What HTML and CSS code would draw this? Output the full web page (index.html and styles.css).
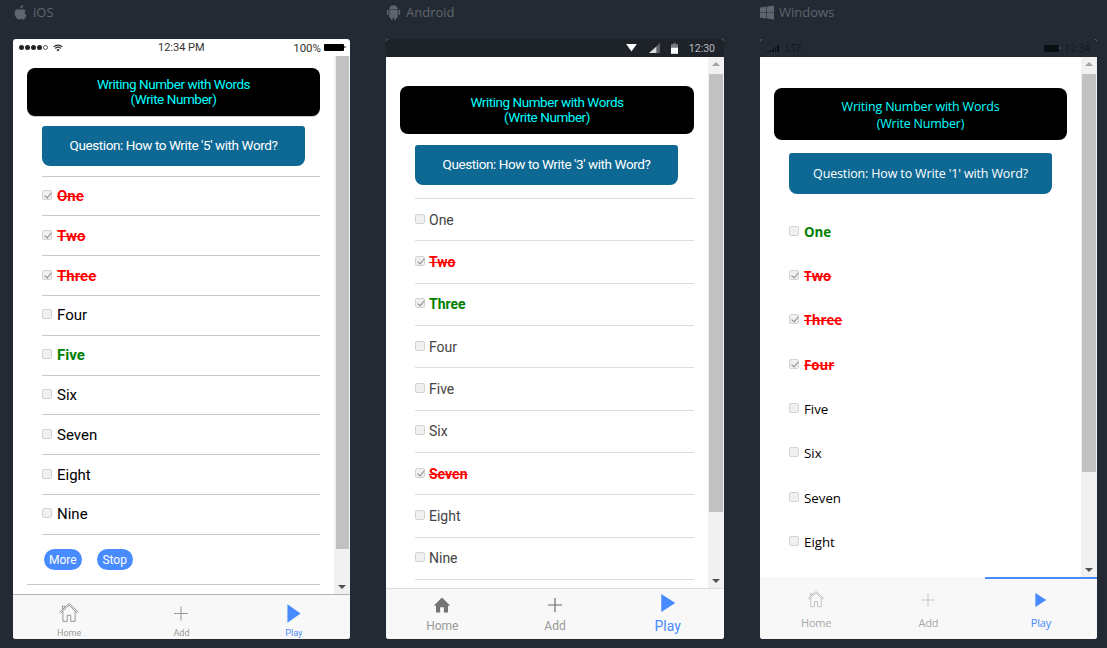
FILE: index.html
```html
<!DOCTYPE html>
<html lang="en">

<head>
  <meta charset="UTF-8">
  <title>Write Number</title>
  <link rel="stylesheet" href="styles.css">
</head>

<body>

  <section class="device ios">
    <header class="platform">
      <svg class="platform-icon" viewBox="0 0 14 16"><path d="M10 0c.1 1.100-.3 2-.9 2.700-.6.700-1.500 1.200-2.400 1.100-.1-1 .4-2 .9-2.600C8.200.500 9.200.100 10 0zM13 5.400c-1 .7-1.500 1.500-1.500 2.700 0 1.300.7 2.300 2 2.900-.3 1-.8 1.900-1.400 2.800-.6.800-1.200 1.700-2.200 1.700s-1.300-.6-2.500-.6-1.600.6-2.500.6c-1 0-1.700-.9-2.300-1.800C1.400 12.200.600 10.300.600 8.500c0-2.600 1.700-4 3.400-4 .9 0 1.700.6 2.300.6.600 0 1.500-.7 2.600-.7 1 0 2.300.4 3.100 1z"/></svg>
      iOS
    </header>
    <div class="phone">
      <div class="status">
        <span class="signal"><i></i><i></i><i></i><i></i><i class="off"></i></span>
        <svg class="wifi" viewBox="0 0 14 10"><path d="M7 10 4.800 7.500a3.200 3.200 0 0 1 4.400 0zM3.700 6.300 2.600 5.100a6.400 6.400 0 0 1 8.800 0l-1.100 1.200a4.800 4.800 0 0 0-6.600 0zM1.500 3.900.4 2.700a9.600 9.600 0 0 1 13.200 0l-1.100 1.200a8 8 0 0 0-11 0z"/></svg>
        <span class="clock">12:34 PM</span>
        <span class="percent">100%</span>
        <span class="battery"></span>
      </div>
      <div class="body">
        <main class="content">
          <h1 class="title">Writing Number with Words<br>(Write Number)</h1>
          <h2 class="question">Question: How to Write '5' with Word?</h2>
          <ul class="answers">
            <li><input type="checkbox" checked disabled><span class="wrong">One</span></li>
            <li><input type="checkbox" checked disabled><span class="wrong">Two</span></li>
            <li><input type="checkbox" checked disabled><span class="wrong">Three</span></li>
            <li><input type="checkbox" disabled><span>Four</span></li>
            <li><input type="checkbox" disabled><span class="right">Five</span></li>
            <li><input type="checkbox" disabled><span>Six</span></li>
            <li><input type="checkbox" disabled><span>Seven</span></li>
            <li><input type="checkbox" disabled><span>Eight</span></li>
            <li><input type="checkbox" disabled><span>Nine</span></li>
          </ul>
          <div class="actions">
            <button class="pill">More</button>
            <button class="pill">Stop</button>
          </div>
        </main>
        <div class="scrollbar"><b class="thumb"></b><i class="arrow-down"></i></div>
      </div>
      <nav class="tabs">
        <a class="tab">
          <svg class="tab-icon" viewBox="0 0 24 24"><path class="line" d="M2.500 11.500 12 2.500l9.500 9M5 9.500V21h5v-7h4v7h5V9.500M4.500 7V3.500H7v1.500M1 10.500 12 .5l11 10"/></svg>
          Home
        </a>
        <a class="tab">
          <svg class="tab-icon" viewBox="0 0 24 24"><path class="line" d="M12 4v16M4 12h16"/></svg>
          Add
        </a>
        <a class="tab active">
          <svg class="tab-icon" viewBox="0 0 24 24"><path d="M4.500 1.500 19.500 12 4.500 22.500z"/></svg>
          Play
        </a>
      </nav>
    </div>
  </section>

  <section class="device android">
    <header class="platform">
      <svg class="platform-icon" viewBox="0 0 16 16"><path d="M3.500 5h9v7.500a1 1 0 0 1-1 1h-.8v1.800a.9.900 0 0 1-1.800 0v-1.800H7.100v1.800a.9.900 0 0 1-1.800 0v-1.800h-.8a1 1 0 0 1-1-1zM1.800 5a.9.900 0 0 1 .9.900v4a.9.900 0 0 1-1.800 0v-4A.9.900 0 0 1 1.800 5zm12.400 0a.9.900 0 0 1 .9.900v4a.9.900 0 0 1-1.800 0v-4a.9.900 0 0 1 .9-.9zM3.500 4.400C3.600 2.900 4.400 1.700 5.600 1L5 .2l.3-.2L6 .8a5 5 0 0 1 4 0l.7-.8.300.2-.6.800c1.200.7 2 1.900 2.100 3.400z"/></svg>
      Android
    </header>
    <div class="phone">
      <div class="status">
        <svg class="wifi" viewBox="0 0 12 9"><path d="M0 0h12L6 8.500z"/></svg>
        <svg class="cell" viewBox="0 0 12 11"><path d="M12 0v11H0z" opacity=".35"/><path d="M8 4v7H0z"/></svg>
        <svg class="charge" viewBox="0 0 8 12"><path d="M2.500 0h3v1H8v11H0V1h2.500z" opacity=".4"/><path d="M0 5h8v7H0z"/></svg>
        <span class="clock">12:30</span>
      </div>
      <div class="body">
        <main class="content">
          <h1 class="title">Writing Number with Words<br>(Write Number)</h1>
          <h2 class="question">Question: How to Write '3' with Word?</h2>
          <ul class="answers">
            <li><input type="checkbox" disabled><span>One</span></li>
            <li><input type="checkbox" checked disabled><span class="wrong">Two</span></li>
            <li><input type="checkbox" checked disabled><span class="right">Three</span></li>
            <li><input type="checkbox" disabled><span>Four</span></li>
            <li><input type="checkbox" disabled><span>Five</span></li>
            <li><input type="checkbox" disabled><span>Six</span></li>
            <li><input type="checkbox" checked disabled><span class="wrong">Seven</span></li>
            <li><input type="checkbox" disabled><span>Eight</span></li>
            <li><input type="checkbox" disabled><span>Nine</span></li>
          </ul>
        </main>
        <div class="scrollbar"><i class="arrow-up"></i><b class="thumb"></b><i class="arrow-down"></i></div>
      </div>
      <nav class="tabs">
        <a class="tab">
          <svg class="tab-icon" viewBox="0 0 24 24"><path d="M12 2 23 13h-3v9h-5.500v-7h-5v7H4v-9H1z"/></svg>
          Home
        </a>
        <a class="tab">
          <svg class="tab-icon" viewBox="0 0 24 24"><path class="line" d="M12 2.500v19M2.500 12h19"/></svg>
          Add
        </a>
        <a class="tab active">
          <svg class="tab-icon" viewBox="0 0 24 24"><path d="M3 0 21.700 12 3 24z"/></svg>
          Play
        </a>
      </nav>
    </div>
  </section>

  <section class="device windows">
    <header class="platform">
      <svg class="platform-icon" viewBox="0 0 15 15"><path d="M0 2.200 6.800 1.200v6H0zM7.500 1.100 15 0v7.200H7.500zM0 7.900h6.800v6L0 13zM7.500 7.900H15V15l-7.500-1z"/></svg>
      Windows
    </header>
    <div class="phone">
      <div class="status">
        <span class="bars"><i></i><i></i><i></i><i></i><i></i></span>
        <span class="lte">LTE</span>
        <span class="battery"></span>
        <span class="clock">12:34</span>
      </div>
      <div class="body">
        <main class="content">
          <h1 class="title">Writing Number with Words<br>(Write Number)</h1>
          <h2 class="question">Question: How to Write '1' with Word?</h2>
          <ul class="answers">
            <li><input type="checkbox" disabled><span class="right">One</span></li>
            <li><input type="checkbox" checked disabled><span class="wrong">Two</span></li>
            <li><input type="checkbox" checked disabled><span class="wrong">Three</span></li>
            <li><input type="checkbox" checked disabled><span class="wrong">Four</span></li>
            <li><input type="checkbox" disabled><span>Five</span></li>
            <li><input type="checkbox" disabled><span>Six</span></li>
            <li><input type="checkbox" disabled><span>Seven</span></li>
            <li><input type="checkbox" disabled><span>Eight</span></li>
          </ul>
        </main>
        <div class="scrollbar"><i class="arrow-up"></i><b class="thumb"></b><i class="arrow-down"></i></div>
      </div>
      <nav class="tabs">
        <a class="tab">
          <svg class="tab-icon" viewBox="0 0 24 24"><path class="line" d="M2.500 11.500 12 2.500l9.500 9M5 9.500V21h5v-7h4v7h5V9.500M4.500 7V3.500H7v1.500M1 10.500 12 .5l11 10"/></svg>
          Home
        </a>
        <a class="tab">
          <svg class="tab-icon" viewBox="0 0 24 24"><path class="line" d="M12 3.500v17M3.500 12h17"/></svg>
          Add
        </a>
        <a class="tab active">
          <svg class="tab-icon" viewBox="0 0 24 24"><path d="M4.500 2.700 19 12 4.500 21.300z"/></svg>
          Play
        </a>
      </nav>
    </div>
  </section>

</body>

</html>
```
FILE: styles.css
```css
* {
  box-sizing: border-box;
}

html,
body {
  height: 100%;
}

body {
  margin: 0;
  padding: 0 10px 9px 13px;
  background-color: #232a33;
  display: flex;
  gap: 36px;
  overflow: hidden;
  font-family: "Roboto", "Liberation Sans", sans-serif;
}

.device {
  width: 337px;
  display: flex;
  flex-direction: column;
}

.device.android {
  width: 338px;
}

.platform {
  height: 39px;
  padding-bottom: 15px;
  display: flex;
  align-items: center;
  gap: 5px;
  font-family: "Open Sans", sans-serif;
  font-size: 13px;
  color: #5f656d;
}

.platform-icon {
  width: 14px;
  height: 15px;
  fill: #5f656d;
}

.ios .platform {
  gap: 6px;
}

.ios .platform-icon {
  width: 13px;
  margin-left: 1px;
}

.android .platform-icon {
  width: 15px;
}

.phone {
  flex: 1;
  min-height: 0;
  display: flex;
  flex-direction: column;
  border-radius: 3px;
  overflow: hidden;
  background-color: #fff;
}

/* 状态栏 */
.status {
  flex: none;
  height: 17px;
  display: flex;
  align-items: center;
  font-size: 11.500px;
}

.ios .status {
  padding: 0 6px 0 6px;
  color: #333;
}

.signal {
  display: flex;
  gap: 1px;
}

.signal i {
  width: 5px;
  height: 5px;
  border-radius: 50%;
  background-color: #222;
}

.signal i.off {
  background: none;
  border: 1px solid #555;
}

.ios .wifi {
  width: 10px;
  height: 8px;
  margin-left: 5px;
  fill: #333;
}

.ios .clock {
  margin-left: 95px;
  font-size: 11px;
}

.ios .percent {
  margin-left: auto;
  margin-right: 3px;
}

.battery {
  position: relative;
  width: 20px;
  height: 7px;
  border-radius: 1px;
  background-color: #000;
}

.battery::after {
  content: "";
  position: absolute;
  top: 2px;
  right: -3px;
  border-left: 3px solid #555;
  border-top: 1.500px solid transparent;
  border-bottom: 1.500px solid transparent;
}

.android .status {
  height: 18px;
  padding-right: 9px;
  justify-content: flex-end;
  background-color: #1e2229;
  color: #bbb;
  font-size: 10.500px;
}

.android .wifi {
  width: 11px;
  height: 8px;
  fill: #fff;
}

.android .cell {
  width: 11px;
  height: 10px;
  margin-left: 12px;
  fill: #ddd;
}

.android .charge {
  width: 7px;
  height: 11px;
  margin-left: 11px;
  fill: #fff;
}

.android .clock {
  margin-left: 11px;
}

.windows .status {
  height: 18px;
  padding-right: 7px;
  background-color: #232a33;
  color: #15191e;
  font-family: "Open Sans", sans-serif;
  font-size: 10px;
}

.bars {
  margin-left: 7px;
  display: flex;
  align-items: flex-end;
  gap: 1px;
  height: 7px;
}

.bars i {
  width: 1.500px;
  background-color: #0c0f12;
}

.bars i:nth-child(1) { height: 1px; }
.bars i:nth-child(2) { height: 2px; }
.bars i:nth-child(3) { height: 3px; }
.bars i:nth-child(4) { height: 5px; }
.bars i:nth-child(5) { height: 7px; }

.lte {
  margin-left: 7px;
}

.windows .battery {
  margin-left: auto;
  width: 15px;
  background-color: #0c0f12;
}

.windows .clock {
  margin-left: 6px;
}

/* 主体 */
.body {
  flex: 1;
  min-height: 0;
  display: flex;
}

.content {
  flex: 1;
  min-width: 0;
  padding: 12px 14px 0;
  overflow: hidden;
}

.title {
  margin: 0;
  height: 48px;
  padding-top: 9px;
  border-radius: 8px;
  background-color: #000;
  color: #0ff;
  text-align: center;
  font-size: 13.500px;
  font-weight: 400;
  line-height: 15px;
  letter-spacing: -0.450px;
}

.ios .title {
  box-shadow: 0 1px 0 #c8c7cc;
}

.question {
  margin: 10px 15px 0;
  height: 40px;
  border-radius: 3px 3px 8px 8px;
  background-color: #0d6894;
  color: #fff;
  text-align: center;
  font-size: 13.500px;
  font-weight: 400;
  line-height: 39px;
  letter-spacing: -0.420px;
}

.answers {
  margin: 9.600px 0 0 15px;
  padding: 0;
  list-style: none;
  border-top: 1px solid #c8c7cc;
  font-size: 15px;
}

.answers li {
  height: 39.800px;
  display: flex;
  align-items: center;
  gap: 5px;
  border-bottom: 1px solid #c8c7cc;
  color: #000;
}

.answers input {
  appearance: none;
  position: relative;
  margin: 0 0 2px;
  width: 10px;
  height: 10px;
  border: 1px solid #d3d3d3;
  border-radius: 2px;
  background-color: #f0f0f0;
}

.answers input:checked::after {
  content: "";
  position: absolute;
  left: 2.500px;
  top: 0;
  width: 3px;
  height: 6px;
  border: solid #8a8a8a;
  border-width: 0 1.500px 1.500px 0;
  transform: rotate(40deg);
}

.wrong {
  color: #f00;
  font-weight: 700;
  text-decoration: line-through;
}

.right {
  color: #008000;
  font-weight: 700;
}

.actions {
  height: 49.500px;
  padding: 14.500px 2px 0;
  margin-left: 15px;
  display: flex;
  align-items: flex-start;
  gap: 15px;
}

.ios .content::after {
  content: "";
  display: block;
  border-top: 1px solid #c8c7cc;
}

.pill {
  min-width: 36px;
  height: 21px;
  padding: 0 5px;
  border: none;
  border-radius: 11px;
  background-color: #488aff;
  color: #fff;
  font-family: inherit;
  font-size: 12px;
}

.android .content {
  padding-top: 29px;
}

.android .question {
  margin: 11px 16px 0 15px;
}

.android .answers {
  margin-top: 12.950px;
  border-color: #ddd;
  font-size: 14px;
}

.android .answers li {
  height: 42.370px;
  gap: 4px;
  border-color: #ddd;
  color: #444;
}

.windows .content {
  padding-top: 31px;
  font-family: "Open Sans", sans-serif;
}

.windows .title {
  height: 52px;
  padding-top: 10px;
  line-height: 17px;
  font-size: 12.500px;
  letter-spacing: -0.200px;
}

.windows .question {
  margin-top: 13px;
  height: 41px;
  line-height: 41px;
  font-size: 12.500px;
  letter-spacing: -0.150px;
}

.windows .answers {
  margin-top: 15.600px;
  border: none;
  font-size: 13.300px;
}

.windows .answers li {
  height: 44.320px;
  border: none;
}

/* 滚动条 */
.scrollbar {
  flex: none;
  width: 16px;
  background-color: #f1f1f1;
  display: flex;
  flex-direction: column;
  align-items: center;
  padding: 0 1px;
}

.thumb {
  align-self: stretch;
  background-color: #c1c1c1;
}

.ios .thumb {
  height: 493px;
  margin-left: 1px;
}

.android .thumb {
  height: 438px;
}

.windows .thumb {
  height: 398px;
}

.arrow-up {
  flex: none;
  width: 0;
  height: 0;
  margin-top: 5px;
  margin-bottom: 8px;
  border-left: 4px solid transparent;
  border-right: 4px solid transparent;
  border-bottom: 4px solid #a3a3a3;
}

.arrow-down {
  width: 0;
  height: 0;
  margin-top: auto;
  margin-bottom: 5px;
  border-left: 4px solid transparent;
  border-right: 4px solid transparent;
  border-top: 4px solid #505050;
}

/* 底部标签 */
.tabs {
  flex: none;
  height: 45px;
  display: grid;
  grid-template-columns: repeat(3, 1fr);
  border-top: 1px solid #b2b2b2;
  background-color: #f8f8f8;
}

.tab {
  position: relative;
  display: flex;
  flex-direction: column;
  align-items: center;
  color: #999;
  font-size: 9px;
  line-height: 10px;
  padding-top: 8px;
}

.tab-icon {
  width: 22px;
  height: 21px;
  margin-bottom: 4px;
  fill: #757575;
}

.tab-icon .line {
  fill: none;
  stroke: #8a8a8a;
  stroke-width: 1;
}

.tab.active {
  color: #488aff;
}

.tab.active .tab-icon {
  fill: #488aff;
}

.android .tabs {
  height: 51px;
  border-top-color: #ddd;
}

.android .tab {
  font-size: 12px;
  line-height: 16px;
  padding-top: 7px;
}

.android .tab-icon {
  width: 18px;
  height: 18px;
}

.android .tab-icon .line {
  stroke: #666;
  stroke-width: 1.500;
}

.android .tab.active {
  font-size: 14px;
}

.android .tab.active .tab-icon {
  margin-top: -2px;
  margin-bottom: 6px;
}

.windows .tabs {
  height: 62px;
  border-top: none;
  font-family: "Open Sans", sans-serif;
}

.windows .tab {
  font-size: 11px;
  line-height: 16px;
  letter-spacing: -0.200px;
  padding-top: 14px;
  color: #a8a8a8;
}

.windows .tab-icon {
  width: 18px;
  height: 18px;
  margin-bottom: 6px;
}

.windows .tab-icon .line {
  stroke: #b5b5b5;
}

.windows .tab.active {
  color: #488aff;
}

/* 选中标签上方的蓝线 */
.windows .tab.active::before {
  content: "";
  position: absolute;
  top: 0;
  left: 0;
  right: 0;
  height: 2px;
  background-color: #488aff;
}
```
